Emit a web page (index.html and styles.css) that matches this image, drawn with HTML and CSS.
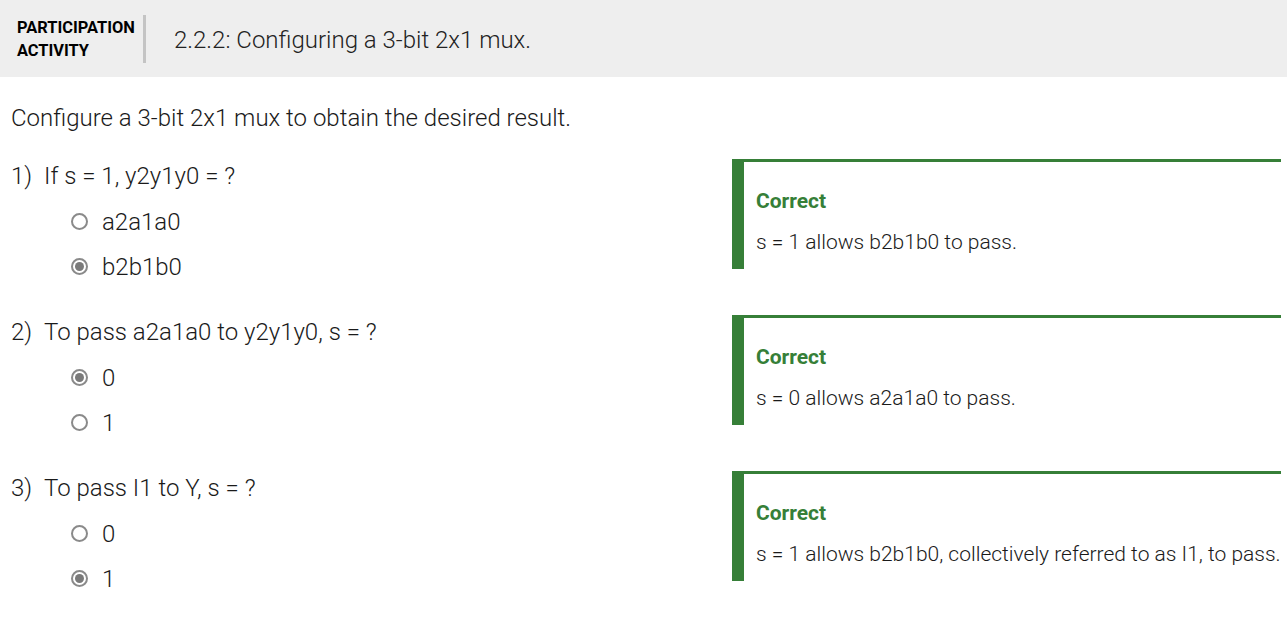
FILE: index.html
```html
<!DOCTYPE html>
<html lang="en">
<head>
<meta charset="utf-8">
<title>Participation activity</title>
<link rel="stylesheet" href="styles.css">
</head>
<body>
<div class="activity">
  <header class="activity-header">
    <div class="activity-label">PARTICIPATION<br>ACTIVITY</div>
    <div class="divider"></div>
    <h1 class="activity-title">2.2.2: Configuring a 3-bit 2x1 mux.</h1>
  </header>
  <div class="activity-body">
    <p class="instructions">Configure a 3-bit 2x1 mux to obtain the desired result.</p>

    <div class="question">
      <div class="question-main">
        <div class="question-text"><span class="qnum">1)</span><span>If s = 1, y2y1y0 = ?</span></div>
        <div class="option"><span class="radio"></span><span>a2a1a0</span></div>
        <div class="option"><span class="radio checked"></span><span>b2b1b0</span></div>
      </div>
      <div class="feedback">
        <div class="feedback-title">Correct</div>
        <div class="feedback-text">s = 1 allows b2b1b0 to pass.</div>
      </div>
    </div>

    <div class="question">
      <div class="question-main">
        <div class="question-text"><span class="qnum">2)</span><span>To pass a2a1a0 to y2y1y0, s = ?</span></div>
        <div class="option"><span class="radio checked"></span><span>0</span></div>
        <div class="option"><span class="radio"></span><span>1</span></div>
      </div>
      <div class="feedback">
        <div class="feedback-title">Correct</div>
        <div class="feedback-text">s = 0 allows a2a1a0 to pass.</div>
      </div>
    </div>

    <div class="question">
      <div class="question-main">
        <div class="question-text"><span class="qnum">3)</span><span>To pass I1 to Y, s = ?</span></div>
        <div class="option"><span class="radio"></span><span>0</span></div>
        <div class="option"><span class="radio checked"></span><span>1</span></div>
      </div>
      <div class="feedback">
        <div class="feedback-title">Correct</div>
        <div class="feedback-text">s = 1 allows b2b1b0, collectively referred to as I1, to pass.</div>
      </div>
    </div>
  </div>
</div>
</body>
</html>
```

FILE: styles.css
```css
* { box-sizing: border-box; }

html, body {
  margin: 0;
  padding: 0;
  background: #ffffff;
}

body {
  font-family: Roboto, "Liberation Sans", sans-serif;
  color: #1a1a1a;
  font-weight: 300;
}

.activity-header {
  display: flex;
  align-items: center;
  height: 77px;
  background: #eeeeee;
  padding-left: 17px;
}

.activity-label {
  font-weight: 700;
  font-size: 16.4px;
  line-height: 23px;
  color: #000;
  width: 126px;
  margin-top: 1px;
}

.divider {
  width: 3px;
  height: 48px;
  background: #c4c4c4;
}

.activity-title {
  margin: 0 0 0 28px;
  font-size: 24px;
  font-weight: 300;
  color: #222;
  line-height: 30px;
  padding-top: 2px;
}

.activity-body {
  padding: 0 6px 0 11px;
}

.instructions {
  margin: 0;
  padding-top: 26px;
  font-size: 24px;
  line-height: 30px;
  height: 82px;
}

.question {
  display: flex;
  height: 156px;
}

.question-main {
  width: 721px;
}

.question-text {
  display: flex;
  font-size: 24px;
  line-height: 30px;
  margin-top: 2px;
}

.qnum {
  width: 33px;
}

.option {
  display: flex;
  align-items: center;
  height: 45px;
  padding-left: 60px;
  font-size: 24px;
}

.question-text + .option {
  margin-top: 8px;
}

.radio {
  width: 17px;
  height: 17px;
  border: 2px solid #8a8a8a;
  border-radius: 50%;
  margin-right: 14px;
  position: relative;
  flex: none;
}

.radio.checked::after {
  content: "";
  position: absolute;
  left: 2px;
  top: 2px;
  width: 9px;
  height: 9px;
  border-radius: 50%;
  background: #7a7a7a;
}

.feedback {
  flex: 1;
  height: 110px;
  border-top: 3px solid #367f38;
  border-left: 12px solid #367f38;
  padding: 28px 0 0 12px;
}

.feedback-title {
  font-weight: 700;
  font-size: 21px;
  line-height: 22px;
  color: #367f38;
}

.feedback-text {
  margin-top: 19px;
  font-size: 21px;
  line-height: 22px;
}
```
